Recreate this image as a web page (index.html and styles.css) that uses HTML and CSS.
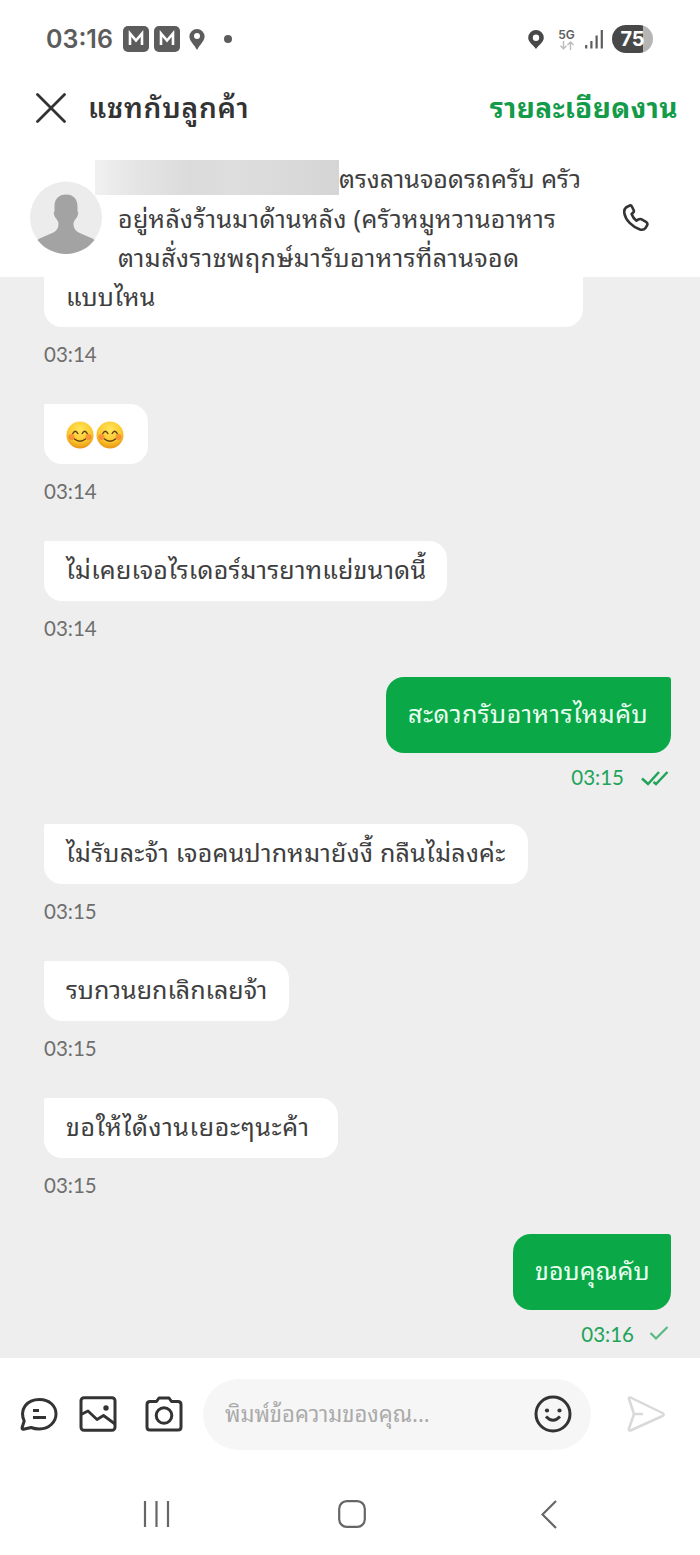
FILE: index.html
```
<!DOCTYPE html>
<html lang="th">
<head>
<meta charset="utf-8">
<title>แชทกับลูกค้า</title>
<link rel="stylesheet" href="styles.css">
</head>
<body>
<div class="status">
  <span class="clock">03:16</span>
  <svg class="app" viewBox="0 0 26 26"><rect width="26" height="26" rx="5" fill="#5c5c5c"/><path d="M7 19V7.5l6 7 6-7V19" fill="none" stroke="#fff" stroke-width="2.6"/></svg>
  <svg class="app app2" viewBox="0 0 26 26"><rect width="26" height="26" rx="5" fill="#5c5c5c"/><path d="M7 19V7.5l6 7 6-7V19" fill="none" stroke="#fff" stroke-width="2.6"/></svg>
  <svg class="pin" viewBox="0 0 16 21"><path fill="#5c5c5c" fill-rule="evenodd" d="M8 0a7.6 7.6 0 0 1 7.6 7.6C15.600 12 11 15.500 8 21 5 15.500.4 12 .4 7.600A7.600 7.600 0 0 1 8 0zm0 4a3 3 0 1 0 0 6 3 3 0 0 0 0-6z"/></svg>
  <span class="dot"></span>
  <svg class="pin pin-right" viewBox="0 0 16 19"><path fill="#484848" fill-rule="evenodd" d="M8 0a7.800 7.800 0 0 1 7.800 7.800C15.800 12 11 15 8 19 5 15 .2 12 .2 7.800A7.800 7.800 0 0 1 8 0zm0 4.500a3.200 3.200 0 1 0 0 6.400 3.200 3.200 0 0 0 0-6.400z"/></svg>
  <span class="net"><b>5G</b><svg viewBox="0 0 14 9"><path d="M3.500 0v7.500M.5 4.800l3 3 3-3M10.500 9V1.200M7.500 4l3-3 3 3" fill="none" stroke="#bbb" stroke-width="1.400"/></svg></span>
  <svg class="signal" viewBox="0 0 18 20"><path d="M1.200 16v3.500M6.400 12v7.500M11.600 6.500v13M16.800 1v18.500" stroke="#5c5c5c" stroke-width="2.200"/></svg>
  <span class="battery">75</span>
</div>
<header class="title">
  <svg class="close" viewBox="0 0 30 30"><path d="M1.500 1.500l27 27M28.500 1.500l-27 27" stroke="#333" stroke-width="2.800" stroke-linecap="round"/></svg>
  <h1 class="name">แชทกับลูกค้า</h1>
  <a class="details">รายละเอียดงาน</a>
</header>
<section class="contact">
  <svg class="avatar" viewBox="0 0 72 73"><circle cx="36" cy="36.500" r="36" fill="#ececec"/><path d="M36 13.500c-8 0-12 5.500-11.500 13v4c-1 .5-1 3 .8 6 1 1.500 2 2.500 3 4.500.8 5-.8 8.500-5 10.500C16 55 10.500 56.500 7.500 59a36 36 0 0 0 57 0C61.500 56.500 56 55 48.700 51.500c-4.200-2-5.800-5.500-5-10.500 1-2 2-3 3-4.500 1.800-3 1.800-5.500.8-6v-4c.5-7.500-3.500-13-11.500-13z" fill="#a3a3a3"/></svg>
  <div class="address">
    <div class="line"><span class="mask"></span><span>ตรงลานจอดรถครับ ครัว</span></div>
    <div class="line"><span class="a2">อยู่หลังร้านมาด้านหลัง (ครัวหมูหวานอาหาร</span></div>
    <div class="line"><span class="a3">ตามสั่งราชพฤกษ์มารับอาหารที่ลานจอด</span></div>
  </div>
  <svg class="phone" viewBox="0 0 26 28"><path d="M3 3.500L6.500 1.600Q8.200 1 9 2.800L10.800 6.500Q11.200 7.800 10 8.700L8.600 10Q10 14 13.500 16.700L15 15.700Q16.800 14.500 18.200 15.200L23 17.800Q25 19 24.200 21.200L22.500 24Q20.500 26.500 17 25.500C9 22.500 2.500 16 1.400 9.500Q.8 5.500 3 3.500Z" fill="none" stroke="#333" stroke-width="2.600" stroke-linejoin="round"/></svg>
</section>
<main class="chat">
  <div class="row"><div class="bubble first"><span class="m1">แบบไหน</span></div><div class="meta">03:14</div></div>
  <div class="row"><div class="bubble emoji">
    <svg viewBox="0 0 28 28"><defs><radialGradient id="face" cx=".5" cy=".3" r=".75"><stop offset="0" stop-color="#ffe65c"/><stop offset=".6" stop-color="#fbc72b"/><stop offset="1" stop-color="#e58a12"/></radialGradient></defs><circle cx="14" cy="14" r="13.500" fill="url(#face)"/><circle cx="5.500" cy="16" r="3" fill="#f5703c" opacity=".6"/><circle cx="22.500" cy="16" r="3" fill="#f5703c" opacity=".6"/><path d="M6.800 12.500q2.500-4.500 5 0M16.200 12.500q2.500-4.500 5 0M8.500 18q5.500 4.500 11 0" fill="none" stroke="#65401a" stroke-width="1.500" stroke-linecap="round"/></svg>
    <svg viewBox="0 0 28 28"><circle cx="14" cy="14" r="13.500" fill="url(#face)"/><circle cx="5.500" cy="16" r="3" fill="#f5703c" opacity=".6"/><circle cx="22.500" cy="16" r="3" fill="#f5703c" opacity=".6"/><path d="M6.800 12.500q2.500-4.500 5 0M16.200 12.500q2.500-4.500 5 0M8.500 18q5.500 4.500 11 0" fill="none" stroke="#65401a" stroke-width="1.500" stroke-linecap="round"/></svg>
  </div><div class="meta">03:14</div></div>
  <div class="row before-sent"><div class="bubble w3"><span class="m3">ไม่เคยเจอไรเดอร์มารยาทแย่ขนาดนี้</span></div><div class="meta">03:14</div></div>
  <div class="row sent"><div class="bubble w4"><span class="m4">สะดวกรับอาหารไหมคับ</span></div><div class="meta">03:15<svg class="ticks" viewBox="0 0 28 16"><path d="M1 8.500l6 5.500L18 2M12.500 12l2.500 2L26.500 2" fill="none" stroke="#21a45a" stroke-width="2.500"/></svg></div></div>
  <div class="row"><div class="bubble w5"><span class="m5">ไม่รับละจ้า เจอคนปากหมายังงี้ กลืนไม่ลงค่ะ</span></div><div class="meta">03:15</div></div>
  <div class="row"><div class="bubble w6"><span>รบกวนยกเลิกเลยจ้า</span></div><div class="meta">03:15</div></div>
  <div class="row before-sent"><div class="bubble w7"><span class="m7">ขอให้ได้งานเยอะๆนะค้า</span></div><div class="meta">03:15</div></div>
  <div class="row sent"><div class="bubble w8"><span>ขอบคุณคับ</span></div><div class="meta">03:16<svg class="tick" viewBox="0 0 20 16"><path d="M1.500 8l5.500 5.500L18.500 2" fill="none" stroke="#58b984" stroke-width="2.200"/></svg></div></div>
</main>
<footer class="composer">
  <svg class="ic i1" viewBox="0 0 38 36"><path d="M4.200 25C-1 13 7 3.500 19.500 3.500 29.500 3.500 36 10 36 18S29 33 19.500 33c-4 0-6-.5-8.500-1.500l-7.500 1.800c-1.300 0-1.600-1-1.300-2z" fill="none" stroke="#333" stroke-width="3" stroke-linejoin="round"/><path d="M13 14.500h6M13 21.500h13" stroke="#333" stroke-width="2.800"/></svg>
  <svg class="ic i2" viewBox="0 0 38 36"><rect x="2" y="1.800" width="34" height="32.400" rx="3" fill="none" stroke="#333" stroke-width="3"/><path d="M2 18.500l7-3.500 9 8.500 6.500-4L36 28" fill="none" stroke="#333" stroke-width="2.800" stroke-linejoin="round"/><circle cx="27" cy="12" r="2.700" fill="#333"/></svg>
  <svg class="ic i3" viewBox="0 0 38 36"><path d="M5 5.500h6.500l2.500-3.500h10l2.500 3.500H33q3 0 3 3v22.500q0 3-3 3H5q-3 0-3-3V8.500q0-3 3-3z" fill="none" stroke="#333" stroke-width="3" stroke-linejoin="round"/><circle cx="19" cy="19.500" r="7.800" fill="none" stroke="#333" stroke-width="3"/></svg>
  <div class="field"><span class="hint">พิมพ์ข้อความของคุณ...</span>
    <svg viewBox="0 0 38 38"><circle cx="19" cy="19" r="17" fill="none" stroke="#333" stroke-width="3"/><circle cx="13" cy="15.500" r="2.100" fill="#333"/><circle cx="25.500" cy="15.500" r="2.100" fill="#333"/><path d="M12 21.500q7 7.500 14 0" fill="none" stroke="#333" stroke-width="3"/></svg>
  </div>
  <svg class="send" viewBox="0 0 38 36"><path d="M3.500 1.500Q1.500 1 2 3l5 15-5 14.500q-.5 2.500 1.500 2L35.500 20q2.500-1.500 0-3zM7 18h9" fill="none" stroke="#d9d9d9" stroke-width="2.500" stroke-linejoin="round"/></svg>
</footer>
<nav class="nav">
  <svg class="n1" viewBox="0 0 28 28"><path d="M2 1v26M13.500 1v26M25 1v26" stroke="#666" stroke-width="2.200"/></svg>
  <svg class="n2" viewBox="0 0 28 28"><rect x="1.200" y="1.200" width="25.600" height="25.600" rx="7.500" fill="none" stroke="#666" stroke-width="2.200"/></svg>
  <svg class="n3" viewBox="0 0 16 29"><path d="M15 1L1.500 14.500 15 28" fill="none" stroke="#666" stroke-width="2.200"/></svg>
</nav>
</body>
</html>
```

FILE: styles.css
```
* { box-sizing: border-box; }
body { margin: 0; width: 700px; height: 1555px; overflow: hidden; background: #fff; color: #3e3e3e; font-family: "Noto Sans Thai Looped", "Noto Looped Thai", Sarabun, Laksaman, Loma, Garuda, Waree, "Noto Sans Thai", "Noto Sans", sans-serif; font-size: 25px; display: flex; flex-direction: column; }
svg { display: block; flex: none; }
span { white-space: nowrap; }
.status { height: 78px; padding: 0 47px 0 46px; display: flex; align-items: center; }
.clock { font: 600 25px Inter, sans-serif; color: #5c5c5c; width: 77px; }
.app { width: 26px; height: 26px; }
.app2 { margin-left: 5px; }
.pin { width: 16px; height: 21px; margin-left: 9px; }
.dot { width: 8px; height: 8px; border-radius: 50%; background: #5c5c5c; margin-left: 19px; }
.pin-right { height: 19px; margin-left: auto; }
.net { margin-left: 14px; width: 17px; display: flex; flex-direction: column; align-items: center; }
.net b { font: 600 12px/13px Inter, sans-serif; color: #5c5c5c; }
.net svg { width: 14px; height: 9px; }
.signal { width: 18px; height: 20px; margin-left: 10px; }
.battery { margin-left: 9px; width: 41px; height: 28px; border-radius: 14px; background: linear-gradient(90deg, #484848 76%, #b5b5b5 76%); color: #fff; font: 700 20px/28px Inter, sans-serif; text-align: center; }
.title { height: 72px; padding: 0 22px 12px 36px; display: flex; align-items: center; }
.close { width: 30px; height: 30px; }
.name { margin: 0 0 4px 22px; font-size: 28px; font-weight: 600; line-height: 40px; letter-spacing: 0.8px; color: #333; white-space: nowrap; }
.details { margin: 0 0 4px auto; color: #139b4a; font-size: 28px; font-weight: 700; line-height: 40px; letter-spacing: 0.4px; white-space: nowrap; }
.contact { height: 127px; display: flex; padding: 10px 51px 0 30px; }
.avatar { width: 72px; height: 73px; margin-top: 21px; }
.address { flex: 1; margin-left: 16px; }
.line { height: 39.500px; line-height: 34px; display: flex; }
.mask { width: 244px; height: 35px; margin-left: -23px; flex: none; background: linear-gradient(90deg, #f1f1f1, #e5e5e5 16%, #dbdbdb 40%, #dedede 57%, #d5d5d5); }
.a2 { letter-spacing: 0.330px; }
.a3 { letter-spacing: 0.450px; }
.phone { width: 26px; height: 28px; margin-top: 44px; }
.chat { height: 1081px; background: #eee; padding: 0 29px 0 44px; }
.row { display: flex; flex-direction: column; align-items: flex-start; }
.bubble { height: 60px; background: #fff; border-radius: 2px 18px 18px 18px; padding: 0 0 6px 22px; line-height: 54px; display: flex; align-items: center; }
.first { height: 50px; width: 539px; border-radius: 0 0 18px 18px; padding-bottom: 14px; }
.emoji { width: 104px; gap: 2px; padding-bottom: 0; }
.emoji svg { width: 28px; height: 28px; margin-top: 2px; }
.meta { height: 77px; display: flex; align-items: flex-start; padding-top: 15px; font: 20.500px/24px Lato, sans-serif; color: #6e6e6e; }
.before-sent .meta { height: 76px; }
.sent { align-items: flex-end; }
.sent .bubble { height: 76px; background: #0aa847; color: #e9fff0; border-radius: 18px 3px 18px 18px; }
.sent .meta { height: 71px; padding-top: 12px; color: #21a45a; padding-right: 2px; }
.ticks { width: 28px; height: 16px; margin: 5px 0 0 17px; }
.tick { width: 20px; height: 16px; margin: 3px 0 0 15px; }
.m1 { letter-spacing: 0.300px; }
.m3 { letter-spacing: 0.220px; }
.m4 { letter-spacing: 0.500px; }
.m5 { letter-spacing: 0.260px; }
.m7 { letter-spacing: 0.650px; }
.w3 { width: 403px; }
.w4 { width: 285px; }
.w5 { width: 484px; }
.w6 { width: 245px; }
.w7 { width: 294px; }
.w8 { width: 158px; }
.composer { height: 112px; padding: 0 35px 0 20px; display: flex; align-items: center; }
.ic { width: 38px; height: 36px; }
.i2 { margin-left: 21px; }
.i3 { margin-left: 28px; }
.field { width: 388px; height: 71px; border-radius: 36px; background: #f6f6f6; margin-left: 20px; padding: 0 19px 0 22px; display: flex; align-items: center; justify-content: space-between; }
.field svg { width: 38px; height: 38px; }
.hint { font-size: 22px; color: #aaa; margin-bottom: 5px; }
.send { width: 38px; height: 36px; margin-left: auto; }
.nav { height: 85px; padding: 30px 143px 0; display: flex; }
.n1, .n2 { width: 28px; height: 28px; }
.n2 { margin-left: 167px; }
.n3 { width: 16px; height: 29px; margin-left: auto; }
```
